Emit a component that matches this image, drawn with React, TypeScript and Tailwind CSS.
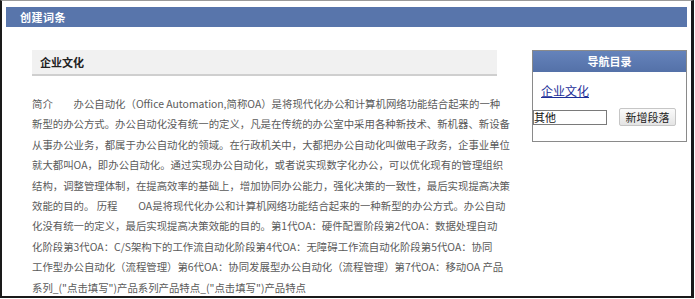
export default function App() {
  const lines = [
    "简介　　办公自动化（Office Automation,简称OA）是将现代化办公和计算机网络功能结合起来的一种",
    "新型的办公方式。办公自动化没有统一的定义，凡是在传统的办公室中采用各种新技术、新机器、新设备",
    "从事办公业务，都属于办公自动化的领域。在行政机关中，大都把办公自动化叫做电子政务，企事业单位",
    "就大都叫OA，即办公自动化。通过实现办公自动化，或者说实现数字化办公，可以优化现有的管理组织",
    "结构，调整管理体制，在提高效率的基础上，增加协同办公能力，强化决策的一致性，最后实现提高决策",
    "效能的目的。 历程　　OA是将现代化办公和计算机网络功能结合起来的一种新型的办公方式。办公自动",
    "化没有统一的定义，最后实现提高决策效能的目的。第1代OA：硬件配置阶段第2代OA：数据处理自动",
    "化阶段第3代OA：C/S架构下的工作流自动化阶段第4代OA：无障碍工作流自动化阶段第5代OA：协同",
    "工作型办公自动化（流程管理）第6代OA：协同发展型办公自动化（流程管理）第7代OA：移动OA 产品",
    "系列_(\"点击填写\")产品系列产品特点_(\"点击填写\")产品特点",
  ];

  return (
    <div className="w-[695px] h-[299px] overflow-hidden bg-white font-['Noto_Sans_CJK_SC','Noto_Sans',sans-serif]">
      <div className="w-[694px] h-[298px] border-t border-t-[#9a9a9a] border-l-2 border-r-[3px] border-b-2 border-[#1a1a1a] pt-[6px] px-[4px]">
        {/* 页头 */}
        <div className="h-[20px] bg-[#5875ab] flex items-center pl-[14px]">
          <span className="text-[11px] font-bold text-white tracking-[0.5px]">创建词条</span>
        </div>

        <div className="flex">
          {/* 正文 */}
          <div className="ml-[26px] mt-[23px] w-[465px]">
            <div className="h-[26px] bg-[#f1f1f1] border-b-2 border-[#cfcfcf] flex items-center pl-[8px]">
              <span className="text-[11px] font-bold text-[#222]">企业文化</span>
            </div>
            <div className="mt-[18px] text-[10.4px] leading-[20.4px] text-[#5a5a5a] whitespace-nowrap">
              {lines.map((line, i) => (
                <div key={i}>{line}</div>
              ))}
            </div>
          </div>

          {/* 导航目录 */}
          <div className="ml-[35px] mt-[23px] w-[155px] h-[92px] border border-[#8a8a8a]">
            <div className="h-[21px] bg-gradient-to-b from-[#6583bb] to-[#5471a8] flex items-center justify-center">
              <span className="text-[11px] font-bold text-white">导航目录</span>
            </div>
            <div className="pl-[8px] mt-[9px] h-[20px] flex items-center">
              <a className="text-[12px] text-[#1d2f99] underline">企业文化</a>
            </div>
            <div className="flex items-center mt-[7px]">
              <div className="w-[74px] h-[15px] border border-[#7a7a7a] flex items-center text-[11px] text-[#111] leading-none">
                其他
              </div>
              <button className="ml-[12px] w-[57px] h-[18px] border border-[#c6c6c6] rounded-[2px] bg-gradient-to-b from-[#fbfbfb] to-[#e4e4e4] text-[11px] text-[#222] leading-none">
                新增段落
              </button>
            </div>
          </div>
        </div>
      </div>
    </div>
  );
}
